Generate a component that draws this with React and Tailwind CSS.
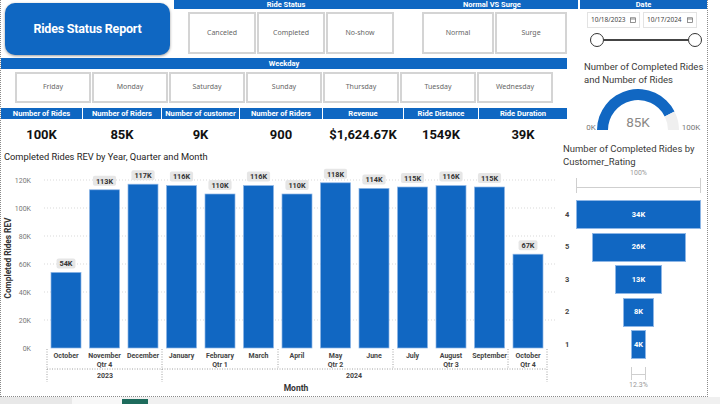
import React from "react";

const bars = [
  ["October", 54], ["November", 113], ["December", 117], ["January", 116],
  ["February", 110], ["March", 116], ["April", 110], ["May", 118],
  ["June", 114], ["July", 115], ["August", 116], ["September", 115], ["October", 67],
];
const X0 = 51, PITCH = 38.5, BW = 30, BASE = 348, K = 1.4;

function Calendar() {
  return (
    <svg width="6" height="6" viewBox="0 0 6 6" className="shrink-0">
      <rect x="0.5" y="0.8" width="5" height="4.7" fill="none" stroke="#666" strokeWidth="0.7" />
      <line x1="0.5" y1="2" x2="5.5" y2="2" stroke="#666" strokeWidth="0.7" />
    </svg>
  );
}

function Btn({ label, w, h }) {
  return (
    <div className={`${w} ${h} border-2 border-[#d4d4d4] bg-white flex items-center justify-center text-[7px] text-[#666] font-['Noto_Sans',sans-serif]`}>
      {label}
    </div>
  );
}

function Chart() {
  const grid = [20, 40, 60, 80, 100, 120];
  return (
    <svg width="559" height="255" viewBox="1 141 559 255" fontFamily="Roboto, sans-serif">
      <text x="4" y="160" fontSize="9.3" fill="#252423">Completed Rides REV by Year, Quarter and Month</text>
      {grid.map((v) => (
        <line key={v} x1="44" x2="557" y1={BASE - v * K} y2={BASE - v * K} stroke="#cfcfcf" strokeWidth="0.8" strokeDasharray="1 2" />
      ))}
      {[0, ...grid].map((v) => (
        <text key={v} x="31" y={BASE - v * K + 2.5} fontSize="7" fill="#777" textAnchor="end">{v}K</text>
      ))}
      <text transform="translate(10.5 258) rotate(-90)" fontSize="8.3" fontWeight="700" fill="#333" textAnchor="middle">Completed Rides REV</text>
      {bars.map(([m, v], i) => {
        const x = X0 + i * PITCH;
        const top = BASE - v * K;
        const lbl = `${v}K`;
        const lw = lbl.length * 4.3 + 6;
        return (
          <g key={i}>
            <rect x={x} y={top} width={BW} height={BASE - top} fill="#1167c2" stroke="#8db6e6" strokeWidth="0.7" />
            <rect x={x + 15 - lw / 2} y={top - 14} width={lw} height="10" rx="2" fill="#e6e6e6" />
            <text x={x + 15} y={top - 6.3} fontSize="7.3" fontWeight="700" fill="#333" textAnchor="middle">{lbl}</text>
            <text x={x + 15} y="358" fontSize="7" fontWeight="700" fill="#444" textAnchor="middle">{m}</text>
          </g>
        );
      })}
      {[[1, "Qtr 4"], [4, "Qtr 1"], [7, "Qtr 2"], [10, "Qtr 3"], [12, "Qtr 4"]].map(([i, q]) => (
        <text key={i} x={X0 + i * PITCH + 15} y="366.5" fontSize="7" fontWeight="700" fill="#444" textAnchor="middle">{q}</text>
      ))}
      <text x="105" y="378" fontSize="7" fontWeight="700" fill="#444" textAnchor="middle">2023</text>
      <text x="354" y="378" fontSize="7" fontWeight="700" fill="#444" textAnchor="middle">2024</text>
      <g stroke="#8a8a8a" strokeWidth="0.8" strokeDasharray="1 1.5">
        <line x1="47" x2="47" y1="349" y2="382" />
        <line x1="162" x2="162" y1="349" y2="382" />
        <line x1="278" x2="278" y1="349" y2="369" />
        <line x1="393" x2="393" y1="349" y2="369" />
        <line x1="508" x2="508" y1="349" y2="369" />
        <line x1="547" x2="547" y1="349" y2="382" />
        <line x1="47" x2="547" y1="369" y2="369" />
      </g>
      <text x="296" y="391" fontSize="8.5" fontWeight="700" fill="#333" textAnchor="middle">Month</text>
    </svg>
  );
}

function Gauge() {
  return (
    <svg width="140" height="49" viewBox="567 86 140 49" fontFamily="Roboto, sans-serif">
      <path d="M 597 130 A 41 41 0 0 1 674.5 111.4 L 664.7 116.4 A 30 30 0 0 0 608 130 Z" fill="#1167c2" />
      <path d="M 674.5 111.4 A 41 41 0 0 1 679 130 L 668 130 A 30 30 0 0 0 664.7 116.4 Z" fill="#efefef" />
      <text x="638" y="127" fontSize="13.5" fill="#8a8886" textAnchor="middle">85K</text>
      <text x="591" y="130" fontSize="8" fill="#777" textAnchor="middle">0K</text>
      <text x="691" y="130" fontSize="8" fill="#777" textAnchor="middle">100K</text>
    </svg>
  );
}

const funnel = [["4", "34K", "w-[125px]"], ["5", "26K", "w-[94px]"], ["3", "13K", "w-[47px]"], ["2", "8K", "w-[31px]"], ["1", "4K", "w-[15px]"]];

function Funnel() {
  return (
    <div className="w-[147px] pl-[3px] flex flex-col">
      <div className="mt-[1px] text-[9.5px] leading-[13px] text-[#3b3a39]">
        Number of Completed Rides by<br />Customer_Rating
      </div>
      <div className="flex">
        <div className="w-[13px]" />
        <div className="w-[125px] flex flex-col items-center">
          <div className="h-[10px] text-[7px] leading-[10px] text-[#999]">100%</div>
          <svg width="125" height="15" viewBox="0 0 125 15">
            <g stroke="#cfcfcf" strokeWidth="1">
              <line x1="0.5" x2="0.5" y1="0" y2="15" />
              <line x1="124.5" x2="124.5" y1="0" y2="15" />
              <line x1="0" x2="125" y1="9.5" y2="9.5" />
            </g>
          </svg>
          <div className="h-[7px]" />
        </div>
      </div>
      <div className="flex flex-col gap-[3.5px]">
        {funnel.map(([r, v, w]) => (
          <div key={r} className="flex h-[29px] items-center">
            <div className="w-[13px] pl-[2px] text-[7.5px] font-bold text-[#444]">{r}</div>
            <div className="w-[125px] flex justify-center h-full">
              <div className={`${w} h-full bg-[#1167c2] border border-[#8db6e6] flex items-center justify-center text-white text-[7.5px] font-bold`}>{v}</div>
            </div>
          </div>
        ))}
      </div>
      <div className="flex">
        <div className="w-[13px]" />
        <div className="w-[125px] flex flex-col items-center mt-[8px]">
          <svg width="15" height="13" viewBox="0 0 15 13">
            <g stroke="#cfcfcf" strokeWidth="1">
              <line x1="0.5" x2="0.5" y1="0" y2="13" />
              <line x1="14.5" x2="14.5" y1="0" y2="13" />
              <line x1="0" x2="15" y1="7.5" y2="7.5" />
            </g>
          </svg>
          <div className="h-[10px] text-[7px] leading-[10px] text-[#999]">12.3%</div>
        </div>
      </div>
    </div>
  );
}

const kpis = [
  ["Number of Rides", "100K", "w-[81px]"],
  ["Number of Riders", "85K", "w-[78px]"],
  ["Number of customer", "9K", "w-[77px]"],
  ["Number of Riders", "900", "w-[82px]"],
  ["Revenue", "$1,624.67K", "w-[80px]"],
  ["Ride Distance", "1549K", "w-[74px]"],
  ["Ride Duration", "39K", "w-[88px]"],
];

export default function App() {
  return (
    <div className="w-[720px] h-[404px] bg-white overflow-hidden font-['Roboto',sans-serif] text-[#252423] flex flex-col">
      <div className="h-[397px] w-[708px] border-l border-r border-b border-dotted border-[#8a8a8a] flex flex-col">
        {/* Row 1 */}
        <div className="flex h-[56px] items-start">
          <div className="mt-[3px] ml-[4px] w-[165px] h-[52px] rounded-[10px] bg-[#0f67c2] shadow-[0_1px_3px_rgba(0,0,0,0.4)] flex items-center justify-center text-white font-bold text-[12.5px] tracking-[-0.2px]">
            Rides Status Report
          </div>
          <div className="ml-[4px] w-[232px] flex flex-col">
            <div className="h-[9px] bg-[#0f67c2] text-white font-bold text-[7.5px] leading-[9px] text-center pr-[8px]">Ride Status</div>
            <div className="pl-[14px] mt-[3px] flex gap-[1px]">
              <Btn label="Canceled" w="w-[68px]" h="h-[42px]" />
              <Btn label="Completed" w="w-[68px]" h="h-[42px]" />
              <Btn label="No-show" w="w-[68px]" h="h-[42px]" />
            </div>
          </div>
          <div className="w-[172px] flex flex-col">
            <div className="h-[9px] bg-[#0f67c2] text-white font-bold text-[7.5px] leading-[9px] text-center">Normal VS Surge</div>
            <div className="pl-[16px] mt-[3px] flex gap-[1px]">
              <Btn label="Normal" w="w-[72px]" h="h-[42px]" />
              <Btn label="Surge" w="w-[72px]" h="h-[42px]" />
            </div>
          </div>
          <div className="ml-[2px] w-[127px] flex flex-col">
            <div className="h-[9px] bg-[#1066c0] text-white font-bold text-[7.5px] leading-[9px] text-center">Date</div>
            <div className="pl-[7px] mt-[3px] flex gap-[3px]">
              <div className="w-[53px] h-[16px] border border-[#e3e3e3] flex items-center justify-between px-[3px] text-[6.5px] text-[#444] font-['Noto_Sans',sans-serif]">
                10/18/2023 <Calendar />
              </div>
              <div className="w-[54px] h-[16px] border border-[#e3e3e3] flex items-center justify-between px-[3px] text-[6.5px] text-[#444] font-['Noto_Sans',sans-serif]">
                10/17/2024 <Calendar />
              </div>
            </div>
            <div className="mt-[5px] ml-[10px] w-[112px] h-[14px] flex items-center">
              <div className="w-[14px] h-[14px] rounded-full border-[1.5px] border-[#333] bg-white shrink-0" />
              <div className="flex-1 h-[2px] bg-[#444]" />
              <div className="w-[14px] h-[14px] rounded-full border-[1.5px] border-[#333] bg-white shrink-0" />
            </div>
          </div>
        </div>
        {/* Row 2 */}
        <div className="flex h-[85px]">
          <div className="w-[566px] flex flex-col">
            <div className="mt-[2px] h-[11px] bg-[#0f67c2] text-white font-bold text-[7.5px] leading-[11px] text-center">Weekday</div>
            <div className="pl-[14px] mt-[3px] flex gap-[1px]">
              {["Friday", "Monday", "Saturday", "Sunday", "Thursday", "Tuesday", "Wednesday"].map((d) => (
                <Btn key={d} label={d} w="w-[76px]" h="h-[31px]" />
              ))}
            </div>
            <div className="mt-[5px] h-[11px] flex gap-[1px]">
              {kpis.map(([t, , w], i) => (
                <div key={i} className={`${w} bg-[#0f67c2] text-white font-bold text-[7.6px] leading-[11px] text-center whitespace-nowrap`}>{t}</div>
              ))}
            </div>
            <div className="h-[22px] flex gap-[1px]">
              {kpis.map(([, v, w], i) => (
                <div key={i} className={`${w} pt-[8px] text-[13px] leading-[15px] font-bold text-[#111] text-center whitespace-nowrap`}>{v}</div>
              ))}
            </div>
          </div>
          <div className="w-[140px] flex flex-col">
            <div className="pl-[17px] mt-[4px] text-[9.5px] leading-[13px] text-[#3b3a39] whitespace-nowrap">
              Number of Completed Rides<br />and Number of Rides
            </div>
            <Gauge />
          </div>
        </div>
        {/* Row 3 */}
        <div className="flex flex-1">
          <Chart />
          <Funnel />
        </div>
      </div>
      <div className="flex flex-1 bg-[#f0f0f0]">
        <div className="w-[72px] bg-[#e8e8e8]" />
        <div className="w-[50px] bg-[#f7f7f7]" />
        <div className="w-[26px] mt-[2px] bg-[#1d6b5c]" />
      </div>
    </div>
  );
}
